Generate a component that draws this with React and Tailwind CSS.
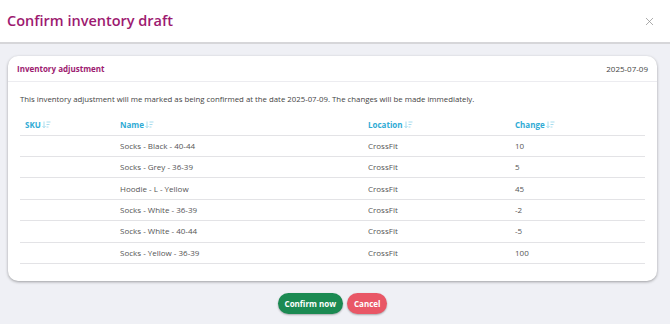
import { X } from "lucide-react";

const rows = [
  { sku: "", name: "Socks - Black - 40-44", location: "CrossFit", change: "10" },
  { sku: "", name: "Socks - Grey - 36-39", location: "CrossFit", change: "5" },
  { sku: "", name: "Hoodie - L - Yellow", location: "CrossFit", change: "45" },
  { sku: "", name: "Socks - White - 36-39", location: "CrossFit", change: "-2" },
  { sku: "", name: "Socks - White - 40-44", location: "CrossFit", change: "-5" },
  { sku: "", name: "Socks - Yellow - 36-39", location: "CrossFit", change: "100" },
];

function SortIcon() {
  return (
    <svg width="9" height="8" viewBox="0 0 9 8" className="ml-[1px] inline-block" fill="none" stroke="#a6dcee" strokeWidth="1">
      <path d="M2 0.5v6M0.5 5l1.5 1.8L3.5 5" />
      <path d="M4.5 1h4M4.5 3.5h3M4.5 6h2" />
    </svg>
  );
}

function HeaderCell({ label, className }) {
  return (
    <th className={`pb-[4px] text-left font-bold text-[#2fabd5] ${className}`}>
      <span className="inline-flex items-center">
        {label}
        <SortIcon />
      </span>
    </th>
  );
}

function App() {
  return (
    <div className="flex h-[324px] w-[670px] flex-col bg-[#eff0f5] font-['Open_Sans',sans-serif]">
      <header className="flex h-[44px] shrink-0 items-center justify-between border-b-2 border-[#d6d6d9] bg-white pl-[7px] pr-[14px]">
        <h1 className="text-[14.5px] font-semibold text-[#9d1a70]">Confirm inventory draft</h1>
        <X size={13} strokeWidth={1.3} className="text-[#8a8a8a]" />
      </header>

      <section className="ml-[8px] mr-[13px] mt-[12px] rounded-[10px] bg-white pb-[17px] shadow-[0_1px_3px_rgba(0,0,0,0.35)]">
        <div className="flex h-[26px] items-center justify-between border-b border-[#ececf0] pl-[9px] pr-[9px]">
          <h2 className="text-[8px] font-bold text-[#9d1a70]">Inventory adjustment</h2>
          <span className="text-[8px] text-[#444]">2025-07-09</span>
        </div>

        <div className="px-[12px]">
          <p className="mt-[12px] text-[7.8px] text-[#444]">
            This inventory adjustment will me marked as being confirmed at the date 2025-07-09. The changes will be made immediately.
          </p>

          <table className="mt-[13px] w-full border-collapse text-[8px]">
            <thead>
              <tr className="border-b border-[#e3e3e6]">
                <HeaderCell label="SKU" className="w-[100px] pl-[5px]" />
                <HeaderCell label="Name" className="w-[248px]" />
                <HeaderCell label="Location" className="w-[147px]" />
                <HeaderCell label="Change" />
              </tr>
            </thead>
            <tbody className="text-[#555]">
              {rows.map((row) => (
                <tr key={row.name} className="h-[21.4px] border-b border-[#e3e3e6]">
                  <td className="pl-[5px]">{row.sku}</td>
                  <td>{row.name}</td>
                  <td>{row.location}</td>
                  <td>{row.change}</td>
                </tr>
              ))}
            </tbody>
          </table>
        </div>
      </section>

      <div className="ml-[8px] mr-[13px] mt-[12px] flex justify-center gap-[4px]">
        <button className="h-[21px] rounded-full bg-[#1b8a52] px-[7px] text-[8px] font-bold text-white shadow-[0_1px_2px_rgba(0,0,0,0.3)]">
          Confirm now
        </button>
        <button className="h-[21px] rounded-full bg-[#e95766] px-[7px] text-[8px] font-bold text-white shadow-[0_1px_2px_rgba(0,0,0,0.3)]">
          Cancel
        </button>
      </div>
    </div>
  );
}

export default App;
